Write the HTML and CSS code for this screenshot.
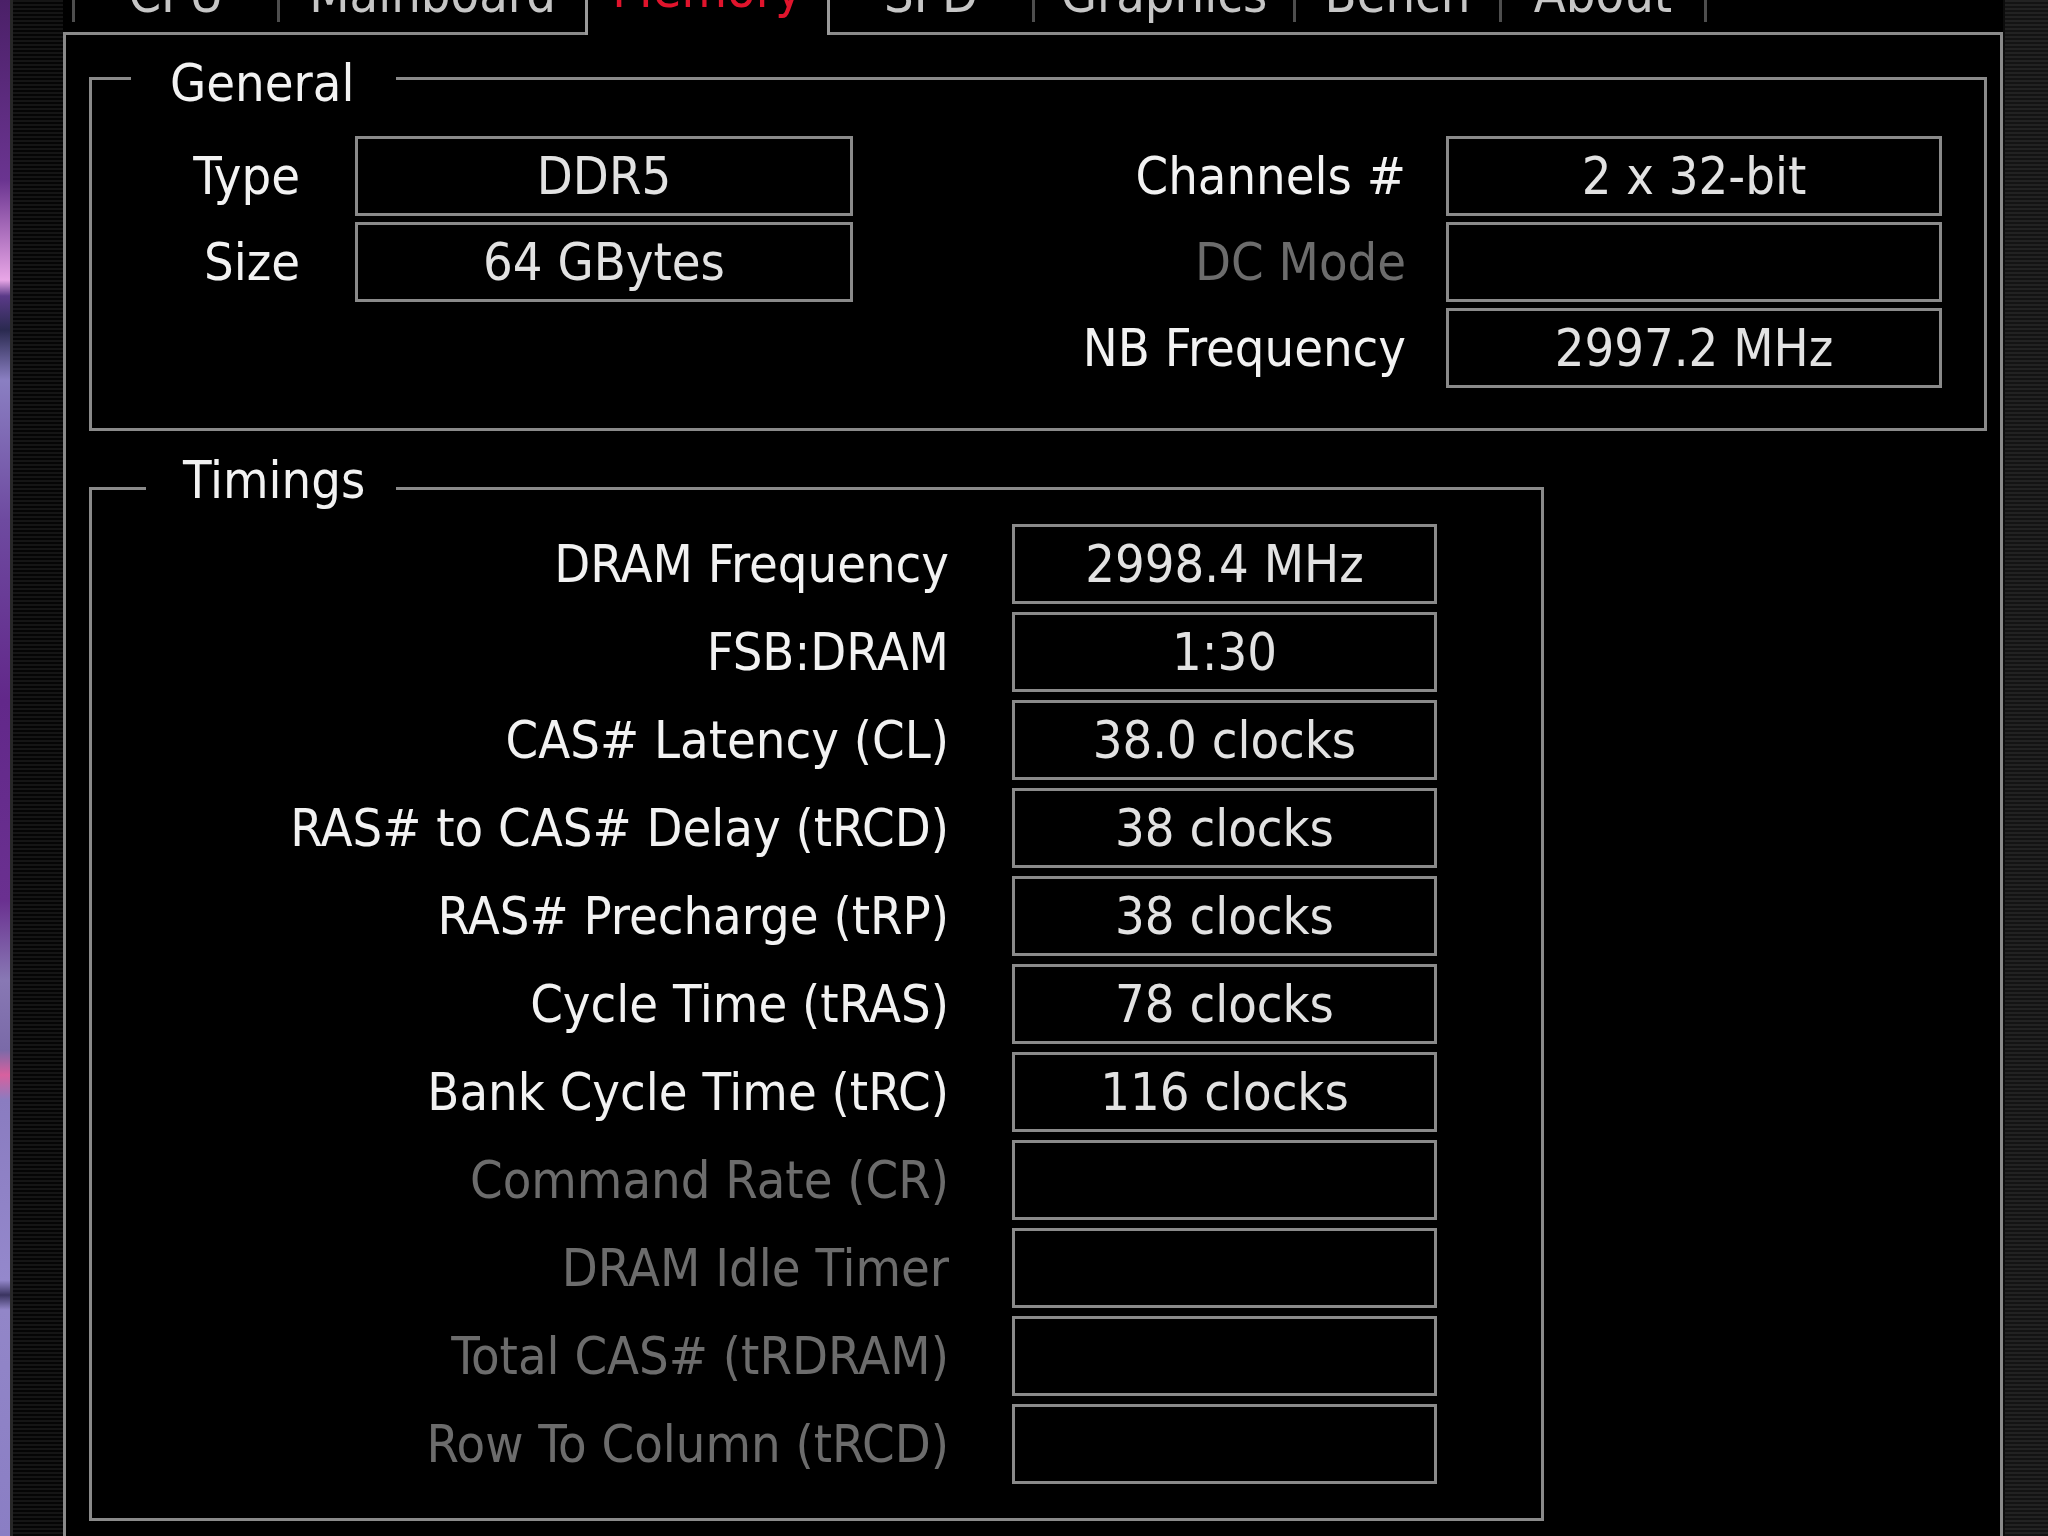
FILE: index.html
```html
<!DOCTYPE html>
<html lang="en">
<head>
    <meta charset="UTF-8">
    <meta name="viewport" content="width=device-width, initial-scale=1.0">
    <title>CPU-Z - Memory</title>
    <link rel="stylesheet" href="styles.css">
</head>
<body>
    <div class="screen">
        <div class="wallpaper"></div>
        <div class="frame frame-left"></div>

        <div class="window">
            <div class="tabs">
                <div class="tab tab-cpu"><span>CPU</span></div>
                <div class="tab tab-mainboard"><span>Mainboard</span></div>
                <div class="tab tab-memory active"><span>Memory</span></div>
                <div class="tab tab-spd"><span>SPD</span></div>
                <div class="tab tab-graphics"><span>Graphics</span></div>
                <div class="tab tab-bench"><span>Bench</span></div>
                <div class="tab tab-about"><span>About</span></div>
            </div>

            <div class="panel">
                <fieldset class="group group-general">
                    <legend>General</legend>
                    <div class="general-grid">
                        <div class="label label-left">Type</div>
                        <div class="value">DDR5</div>
                        <div class="label label-right">Channels #</div>
                        <div class="value">2 x 32-bit</div>

                        <div class="label label-left">Size</div>
                        <div class="value">64 GBytes</div>
                        <div class="label label-right disabled">DC Mode</div>
                        <div class="value"></div>

                        <div></div>
                        <div></div>
                        <div class="label label-right">NB Frequency</div>
                        <div class="value">2997.2 MHz</div>
                    </div>
                </fieldset>

                <fieldset class="group group-timings">
                    <legend>Timings</legend>
                    <div class="timings-grid">
                        <div class="label">DRAM Frequency</div>
                        <div class="value">2998.4 MHz</div>
                        <div class="label">FSB:DRAM</div>
                        <div class="value">1:30</div>
                        <div class="label">CAS# Latency (CL)</div>
                        <div class="value">38.0 clocks</div>
                        <div class="label">RAS# to CAS# Delay (tRCD)</div>
                        <div class="value">38 clocks</div>
                        <div class="label">RAS# Precharge (tRP)</div>
                        <div class="value">38 clocks</div>
                        <div class="label">Cycle Time (tRAS)</div>
                        <div class="value">78 clocks</div>
                        <div class="label">Bank Cycle Time (tRC)</div>
                        <div class="value">116 clocks</div>
                        <div class="label disabled">Command Rate (CR)</div>
                        <div class="value"></div>
                        <div class="label disabled">DRAM Idle Timer</div>
                        <div class="value"></div>
                        <div class="label disabled">Total CAS# (tRDRAM)</div>
                        <div class="value"></div>
                        <div class="label disabled">Row To Column (tRCD)</div>
                        <div class="value"></div>
                    </div>
                </fieldset>
            </div>
        </div>

        <div class="frame frame-right"></div>
    </div>
</body>
</html>
```

FILE: styles.css
```css
html, body {
    margin: 0;
    background-color: #000;
}

body {
    width: 2048px;
    height: 1536px;
    overflow: hidden;
    font-family: "DejaVu Sans Condensed", "DejaVu Sans", "Liberation Sans", sans-serif;
    font-size: 52px;
    color: #f2f2f2;
}

.screen {
    display: flex;
    height: 1536px;
}

/* desktop wallpaper peeking out on the left */
.wallpaper {
    width: 10px;
    background: linear-gradient(180deg,
        #4b2068 0px, #6a3490 180px, #e8a6e6 280px, #5a3a88 296px,
        #2a2a50 330px, #8a7fc2 380px, #6e4aa0 520px, #62288a 700px,
        #6a3090 900px, #8878b4 980px, #7a6aa8 1050px, #d8609e 1075px,
        #8a7cc0 1100px, #9488cc 1280px, #3a3460 1295px, #9286c8 1310px,
        #8a7ec4 1536px);
}

.frame-left {
    width: 50px;
    border-left: 3px solid #262626;
    background: repeating-linear-gradient(180deg, #151515 0 2px, #050505 2px 4px);
}

.frame-right {
    width: 43px;
    border-left: 2px solid #0c0c0c;
    background: repeating-linear-gradient(180deg, #222 0 2px, #131313 2px 4px);
}

.window {
    width: 1940px;
    display: flex;
    flex-direction: column;
    background-color: #000;
}

/* tab strip */
.tabs {
    display: flex;
    align-items: flex-start;
    height: 32px;
    padding-left: 9px;
}

.tab {
    box-sizing: border-box;
    height: 22px;
    border-left: 3px solid #4e4e4e;
    text-align: center;
    color: #c6c6c6;
}

.tab span {
    display: block;
    line-height: 52px;
    margin-top: -32px;
}

.tab-cpu { width: 205px; }
.tab-mainboard { width: 308px; }
.tab-spd { width: 202px; border-left: 0; }
.tab-graphics { width: 261px; }
.tab-bench { width: 206px; }
.tab-about { width: 208px; border-right: 3px solid #4e4e4e; }

.tab.active {
    position: relative;
    z-index: 1;
    width: 245px;
    height: 35px;
    margin-bottom: -3px;
    border-left: 3px solid #9a9a9a;
    border-right: 3px solid #9a9a9a;
    background-color: #000;
    color: #e0142c;
}

.tab.active span {
    margin-top: -37px;
}

.panel {
    flex: 1;
    border: 3px solid #8a8a8a;
    border-bottom: 0;
    padding: 0 13px 0 23px;
}

/* group boxes */
.group {
    border: 3px solid #8a8a8a;
    margin: 0;
    min-inline-size: 0;
}

.group legend {
    line-height: 40px;
    color: #f2f2f2;
}

.group-general {
    margin-top: 18px;
    padding: 33px 0 40px 0;
}

.group-general legend {
    margin-left: 39px;
    padding: 10px 42px 0 39px;
}

.group-timings {
    width: 1455px;
    box-sizing: border-box;
    margin-top: 29px;
    padding: 8px 0 34px 0;
}

.group-timings legend {
    margin-left: 54px;
    padding: 0 31px 16px 37px;
}

.general-grid {
    display: grid;
    grid-template-columns: 263px 498px 593px 496px;
    grid-template-rows: 80px 80px 80px;
    row-gap: 6px;
}

.timings-grid {
    display: grid;
    grid-template-columns: 920px 425px;
    grid-auto-rows: 80px;
    row-gap: 8px;
}

.label {
    display: flex;
    align-items: center;
    justify-content: flex-end;
    white-space: nowrap;
    color: #f2f2f2;
}

.label-left {
    padding-right: 55px;
}

.label-right {
    padding-right: 40px;
}

.timings-grid .label {
    padding-right: 63px;
}

.label.disabled {
    color: #6c6c6c;
}

.value {
    box-sizing: border-box;
    display: flex;
    align-items: center;
    justify-content: center;
    border: 3px solid #8a8a8a;
    white-space: nowrap;
    color: #e2e2e2;
}
```
